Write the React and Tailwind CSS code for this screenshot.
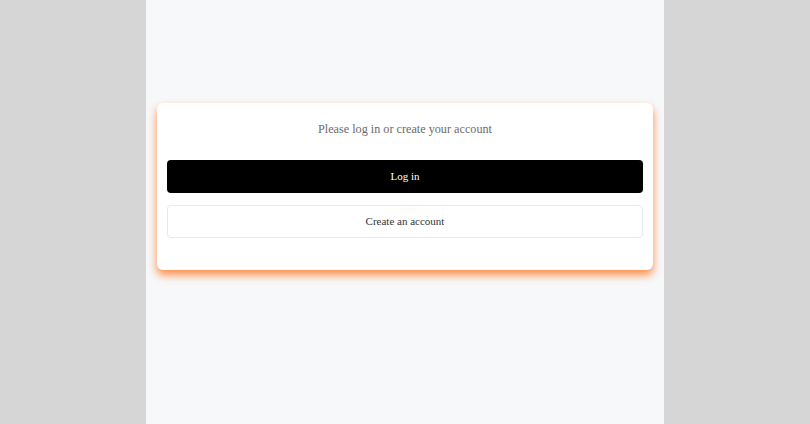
export default function App() {
  return (
    <div className="flex h-[424px] w-full justify-center bg-[#d6d6d6]" style={{ fontFamily: '"Liberation Serif", serif' }}>
      <div className="w-[518px] bg-[#f7f8fa] px-[11px] pt-[103px]">
        <div className="rounded-md bg-white px-[10px] pb-[32px] pt-[18px] shadow-[0_5px_8px_rgba(255,105,10,0.75)]">
          <p className="text-center text-[12.2px] leading-[17px] text-[#6b6b6b]">Please log in or create your account</p>
          <button className="mt-[22px] flex h-[33px] w-full items-center justify-center rounded-[4px] bg-black text-[11px] text-white">Log in</button>
          <button className="mt-[12px] flex h-[33px] w-full items-center justify-center rounded-[4px] border border-[#e8e8e8] bg-white text-[11px] text-[#333]">Create an account</button>
        </div>
      </div>
    </div>
  );
}
